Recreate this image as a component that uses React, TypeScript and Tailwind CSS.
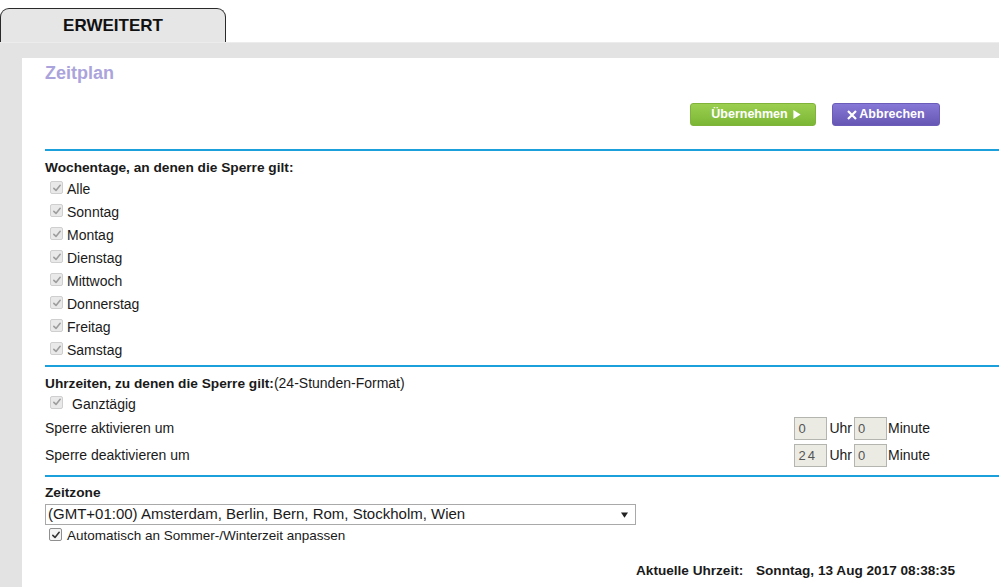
import React from 'react';

const tage = ['Alle', 'Sonntag', 'Montag', 'Dienstag', 'Mittwoch', 'Donnerstag', 'Freitag', 'Samstag'];

function Haken({ aktiv = false }: { aktiv?: boolean }) {
  return (
    <span
      className={
        aktiv
          ? 'flex h-[13px] w-[13px] shrink-0 items-center justify-center rounded-[2px] border border-[#8f8f8f] bg-[#f4f4f4]'
          : 'flex h-[13px] w-[13px] shrink-0 items-center justify-center rounded-[2px] border border-[#cfcfcf] bg-[#e9e9e9]'
      }
    >
      <svg viewBox="0 0 12 12" className="h-[10px] w-[10px]">
        <path d="M2.2 6.4 L4.8 8.9 L9.8 2.8" fill="none" stroke={aktiv ? '#333' : '#9d9d9d'} strokeWidth="1.9" strokeLinecap="round" strokeLinejoin="round" />
      </svg>
    </span>
  );
}

function Linie() {
  return <div className="h-[2px] bg-[#1ba0dc]" />;
}

function Feld({ wert }: { wert: string }) {
  return (
    <div className="flex h-[23px] w-[33px] items-center border border-[#b5b5b0] bg-[#ebebe4] pl-[3px] font-['Liberation_Sans',Arial,sans-serif] text-[13px] tracking-[2px] text-[#555]">
      {wert}
    </div>
  );
}

export default function App() {
  return (
    <div className="h-[587px] w-[999px] overflow-hidden bg-white font-['Liberation_Sans',Arial,sans-serif] text-[14px] text-[#1a1a1a]">
      <div className="h-[42px] pt-[8px]">
        <div className="flex h-[34px] w-[226px] items-center justify-center rounded-t-[9px] border border-b-0 border-[#2a2a2a] bg-[#e6e6e6] text-[17px] font-bold text-[#111]">
          ERWEITERT
        </div>
      </div>
      <div className="h-[545px] border-t border-[#ececec] bg-[#e3e3e3] pl-[22px] pt-[15px]">
        <div className="h-full bg-white pl-[23px]">
          <div className="pt-[5px] text-[18px] font-bold leading-[20px] text-[#aba4dc]">Zeitplan</div>

          <div className="mt-[20px] flex h-[23px] gap-[16px] pl-[645px]">
            <button className="flex h-[23px] w-[126px] items-center justify-center gap-[5px] rounded-[3px] border border-[#7fb33a] bg-gradient-to-b from-[#9ccf4f] to-[#7bb635] pl-[6px] text-[12.5px] font-bold text-white">
              Übernehmen
              <svg viewBox="0 0 8 10" className="h-[9px] w-[8px]"><path d="M0 0 L8 5 L0 10 Z" fill="white" /></svg>
            </button>
            <button className="flex h-[23px] w-[108px] items-center justify-center rounded-[3px] border border-[#6a5cb8] bg-gradient-to-b from-[#8678d6] to-[#6757b5] text-[12.5px] font-bold text-white">
              <svg viewBox="0 0 10 10" className="mr-[2px] h-[10px] w-[10px]"><path d="M1 1 L9 9 M9 1 L1 9" stroke="white" strokeWidth="2.2" /></svg>
              Abbrechen
            </button>
          </div>

          <div className="mt-[23px]"><Linie /></div>

          <div className="mt-[7px] h-[20px] text-[13.7px] font-bold leading-[20px]">Wochentage, an denen die Sperre gilt:</div>
          {tage.map((t) => (
            <div key={t} className="flex h-[23px] items-center">
              <span className="ml-[5px] -mt-[4px]"><Haken /></span>
              <span className="ml-[4px]">{t}</span>
            </div>
          ))}

          <div className="mt-[3px]"><Linie /></div>

          <div className="mt-[6px] h-[20px] leading-[20px]">
            <span className="text-[13.7px] font-bold">Uhrzeiten, zu denen die Sperre gilt:</span>(24-Stunden-Format)
          </div>
          <div className="flex h-[22px] items-center">
            <span className="ml-[5px] -mt-[4px]"><Haken /></span>
            <span className="ml-[9px]">Ganztägig</span>
          </div>
          <div className="flex h-[27px] items-center">
            <span>Sperre aktivieren um</span>
            <div className="ml-auto mr-[69px] flex items-center">
              <Feld wert="0" />
              <span className="ml-[2px] mr-[2px]">Uhr</span>
              <Feld wert="0" />
              <span className="ml-[1px]">Minute</span>
            </div>
          </div>
          <div className="flex h-[27px] items-center">
            <span>Sperre deaktivieren um</span>
            <div className="ml-auto mr-[69px] flex items-center">
              <Feld wert="24" />
              <span className="ml-[2px] mr-[2px]">Uhr</span>
              <Feld wert="0" />
              <span className="ml-[1px]">Minute</span>
            </div>
          </div>

          <div className="mt-[6px]"><Linie /></div>

          <div className="mt-[7px] h-[18px] text-[13.7px] font-bold leading-[18px]">Zeitzone</div>
          <div className="mt-[2px] flex h-[21px] w-[591px] items-center justify-between border border-[#a9a9a9] bg-white pl-[2px] pr-[7px] text-[15px]">
            <span>(GMT+01:00) Amsterdam, Berlin, Bern, Rom, Stockholm, Wien</span>
            <svg viewBox="0 0 8 6" className="h-[6px] w-[7px]"><path d="M0 0 L8 0 L4 6 Z" fill="#222" /></svg>
          </div>
          <div className="flex h-[22px] items-center text-[13.5px]">
            <span className="ml-[4px] -mt-[3px]"><Haken aktiv /></span>
            <span className="ml-[5px]">Automatisch an Sommer-/Winterzeit anpassen</span>
          </div>

          <div className="mt-[14px] flex h-[20px] items-center pl-[591px] text-[13.6px] font-bold">
            <span className="w-[120px]">Aktuelle Uhrzeit:</span>
            <span>Sonntag, 13 Aug 2017 08:38:35</span>
          </div>
        </div>
      </div>
    </div>
  );
}
